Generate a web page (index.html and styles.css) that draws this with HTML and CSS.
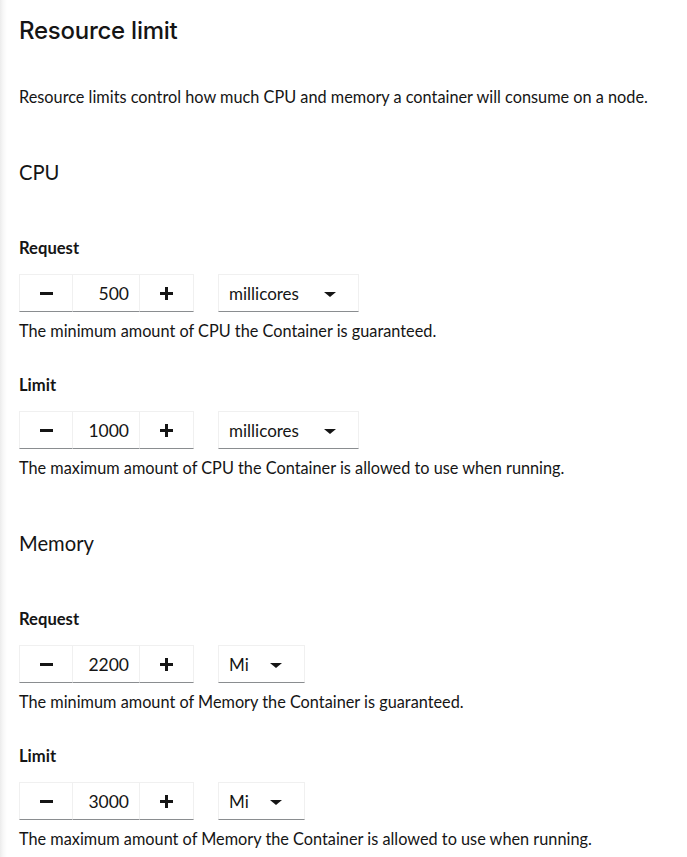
FILE: index.html
```html
<!DOCTYPE html>
<html>
<head>
<meta charset="utf-8">
<link rel="stylesheet" href="styles.css">
</head>
<body>
<div class="page">
  <h1 class="title">Resource limit</h1>
  <p class="desc">Resource limits control how much CPU and memory a container will consume on a node.</p>

  <h2 class="section">CPU</h2>

  <div class="field first">
    <label class="label">Request</label>
    <div class="controls">
      <div class="number">
        <button class="btn"><span class="minus"></span></button>
        <input class="value" value="500">
        <button class="btn"><span class="plus"></span></button>
      </div>
      <div class="select wide"><span>millicores</span><span class="caret"></span></div>
    </div>
    <div class="helper">The minimum amount of CPU the Container is guaranteed.</div>
  </div>

  <div class="field">
    <label class="label">Limit</label>
    <div class="controls">
      <div class="number">
        <button class="btn"><span class="minus"></span></button>
        <input class="value" value="1000">
        <button class="btn"><span class="plus"></span></button>
      </div>
      <div class="select wide"><span>millicores</span><span class="caret"></span></div>
    </div>
    <div class="helper">The maximum amount of CPU the Container is allowed to use when running.</div>
  </div>

  <h2 class="section">Memory</h2>

  <div class="field first">
    <label class="label">Request</label>
    <div class="controls">
      <div class="number">
        <button class="btn"><span class="minus"></span></button>
        <input class="value" value="2200">
        <button class="btn"><span class="plus"></span></button>
      </div>
      <div class="select narrow"><span>Mi</span><span class="caret"></span></div>
    </div>
    <div class="helper">The minimum amount of Memory the Container is guaranteed.</div>
  </div>

  <div class="field">
    <label class="label">Limit</label>
    <div class="controls">
      <div class="number">
        <button class="btn"><span class="minus"></span></button>
        <input class="value" value="3000">
        <button class="btn"><span class="plus"></span></button>
      </div>
      <div class="select narrow"><span>Mi</span><span class="caret"></span></div>
    </div>
    <div class="helper">The maximum amount of Memory the Container is allowed to use when running.</div>
  </div>
</div>
</body>
</html>
```
FILE: styles.css
```css
html, body {
  margin: 0;
  padding: 0;
  background: #fff;
}
body {
  font-family: "Lato", "Open Sans", sans-serif;
  color: #151515;
  background: linear-gradient(to right, #ececec 0px, #f7f7f7 3px, #ffffff 7px);
  min-height: 857px;
}
.page {
  padding: 15px 0 0 19px;
}
.title {
  margin: 0;
  font-family: "Inter", "Open Sans", sans-serif;
  font-size: 24px;
  line-height: 32px;
  font-weight: 500;
  letter-spacing: -0.25px;
}
.desc {
  margin: 38px 0 0;
  font-size: 16.3px;
  line-height: 24px;
}
.section {
  margin: 50px 0 0;
  font-size: 20.2px;
  line-height: 26px;
  font-weight: 400;
}
.field {
  margin-top: 30px;
}
.field.first {
  margin-top: 51px;
}
.label {
  display: block;
  font-size: 16.6px;
  line-height: 24px;
  font-weight: 700;
}
.controls {
  margin-top: 14px;
  display: flex;
  gap: 24px;
  height: 38px;
}
.number {
  display: flex;
}
.btn {
  width: 54px;
  height: 38px;
  background: #fff;
  border: 1px solid #f0f0f0;
  border-bottom-color: #8a8d90;
  padding: 0;
  display: flex;
  align-items: center;
  justify-content: center;
}
.btn + .value {
  border-left: none;
}
.value + .btn {
  border-left: none;
}
.value {
  width: 67px;
  height: 38px;
  box-sizing: border-box;
  border: 1px solid #f0f0f0;
  border-bottom-color: #8a8d90;
  font-family: inherit;
  font-size: 17.5px;
  color: #151515;
  text-align: right;
  padding: 0 10px 0 0;
  outline: none;
}
.btn, .value {
  box-sizing: border-box;
}
.minus {
  display: block;
  width: 13px;
  height: 3px;
  background: #151515;
}
.plus {
  display: block;
  width: 13px;
  height: 13px;
  position: relative;
}
.plus::before, .plus::after {
  content: "";
  position: absolute;
  background: #151515;
}
.plus::before {
  left: 0;
  top: 5px;
  width: 13px;
  height: 3px;
}
.plus::after {
  left: 5px;
  top: 0;
  width: 3px;
  height: 13px;
}
.select {
  box-sizing: border-box;
  height: 38px;
  border: 1px solid #f0f0f0;
  border-bottom-color: #8a8d90;
  display: flex;
  align-items: center;
  justify-content: space-between;
  padding: 0 22px 0 10px;
  font-size: 17px;
}
.select.wide {
  width: 141px;
}
.select.narrow {
  width: 87px;
}
.caret {
  width: 0;
  height: 0;
  border-left: 6px solid transparent;
  border-right: 6px solid transparent;
  border-top: 5px solid #151515;
  margin-top: 3px;
}
.helper {
  margin-top: 7px;
  font-size: 16.3px;
  line-height: 24px;
}
```
